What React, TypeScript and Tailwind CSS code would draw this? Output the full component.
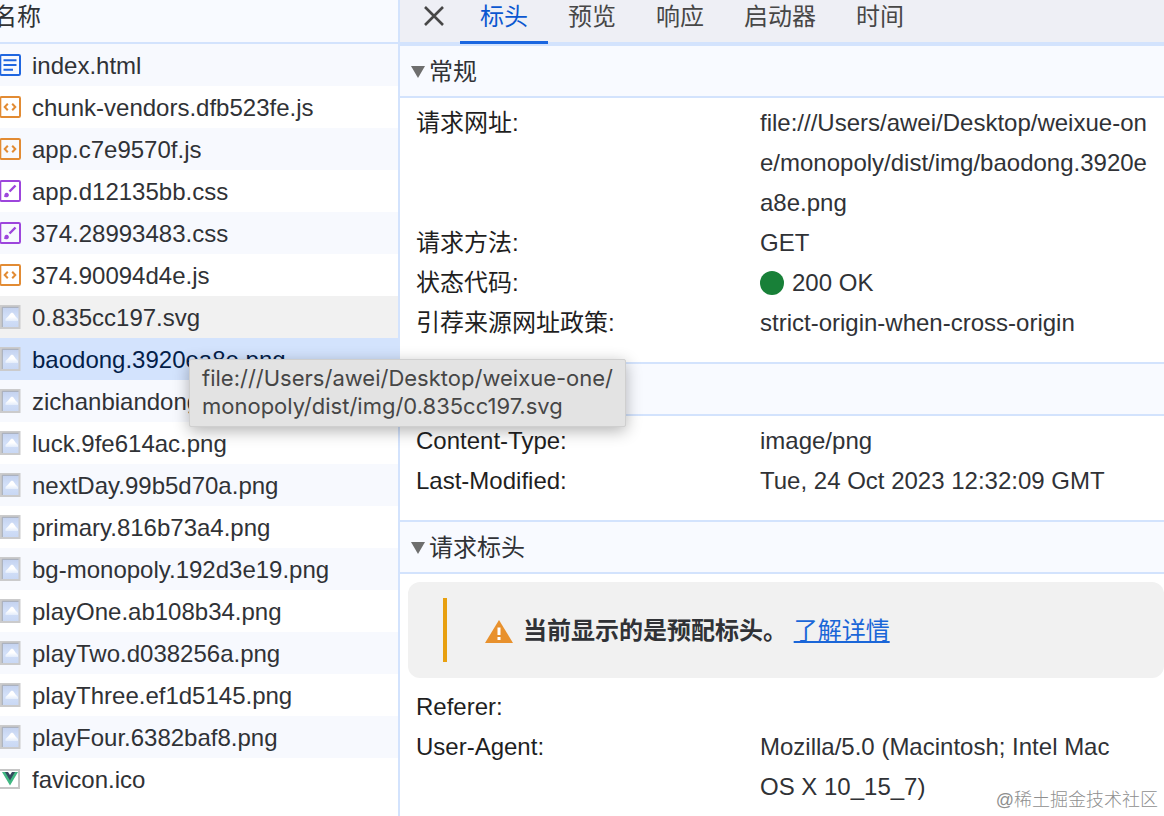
import React, { useState } from 'react';

type FileKind = 'html' | 'js' | 'css' | 'img' | 'vue';

interface NetworkFile {
  name: string;
  kind: FileKind;
}

const files: NetworkFile[] = [
  { name: 'index.html', kind: 'html' },
  { name: 'chunk-vendors.dfb523fe.js', kind: 'js' },
  { name: 'app.c7e9570f.js', kind: 'js' },
  { name: 'app.d12135bb.css', kind: 'css' },
  { name: '374.28993483.css', kind: 'css' },
  { name: '374.90094d4e.js', kind: 'js' },
  { name: '0.835cc197.svg', kind: 'img' },
  { name: 'baodong.3920ea8e.png', kind: 'img' },
  { name: 'zichanbiandong.png', kind: 'img' },
  { name: 'luck.9fe614ac.png', kind: 'img' },
  { name: 'nextDay.99b5d70a.png', kind: 'img' },
  { name: 'primary.816b73a4.png', kind: 'img' },
  { name: 'bg-monopoly.192d3e19.png', kind: 'img' },
  { name: 'playOne.ab108b34.png', kind: 'img' },
  { name: 'playTwo.d038256a.png', kind: 'img' },
  { name: 'playThree.ef1d5145.png', kind: 'img' },
  { name: 'playFour.6382baf8.png', kind: 'img' },
  { name: 'favicon.ico', kind: 'vue' },
];

const tabs = ['标头', '预览', '响应', '启动器', '时间'];

const FileIcon: React.FC<{ kind: FileKind }> = ({ kind }) => {
  if (kind === 'img') {
    return <svg className="h-6 w-[21px] shrink-0" viewBox="0 0 21 24" aria-hidden="true">
      <defs>
        <linearGradient id="sky" x1="0" y1="0" x2="0" y2="1">
          <stop offset="0" stopColor="#c3d1ef" />
          <stop offset="0.5" stopColor="#d3e0f8" />
          <stop offset="1" stopColor="#c9d8f4" />
        </linearGradient>
        <linearGradient id="cloud" x1="0" y1="0" x2="0" y2="1">
          <stop offset="0.5" stopColor="#fff" />
          <stop offset="1" stopColor="#e3ecfb" />
        </linearGradient>
      </defs>
      <path d="M0 0h20.500v24H0z" fill="#cbcbcc" />
      <path d="M2 2h16.500v20H2z" fill="url(#sky)" />
      <path d="M2.300 22V2.300h16.200" fill="none" stroke="#a3a6ad" strokeWidth="0.9" />
      <path d="M5.500 14l2.500-2.200 2.500-3.300 1.500-1 1.500 1 2.200 3.300 2.300 2.200v2h-12.500z" fill="url(#cloud)" />
    </svg>;
  }
  if (kind === 'vue') {
    return <svg className="h-[22px] w-[21px] shrink-0" viewBox="0 0 21 22" aria-hidden="true">
      <path d="M-1 2h20v18H-1z" fill="#fff" stroke="#c6c6c6" strokeWidth="2" />
      <path d="M2 4h4l4 7 4-7h4l-8 13.500z" fill="#41b883" />
      <path d="M5 4h3l2 3 2-3h3l-5 8.500z" fill="#35495e" />
    </svg>;
  }
  const color = kind === 'html' ? '#1f66e0' : kind === 'js' ? '#e28b33' : '#9d45dc';
  return <svg className="h-[22px] w-[21px] shrink-0" viewBox="0 0 21 22" fill="none" stroke={color} aria-hidden="true">
    <rect x="0.300" y="1" width="19.700" height="20" rx="1.200" strokeWidth="2" />
    {kind === 'html' && <path d="M3.500 6.200h13M3.500 11h13M3.500 15.800h9.500" strokeWidth="2" />}
    {kind === 'js' && <path d="M7.800 7.700L4.700 11l3.100 3.300M12.200 7.700l3.100 3.300-3.100 3.300" strokeWidth="2" />}
    {kind === 'css' && <>
      <path d="M15.500 5.500L9.500 11.500" strokeWidth="2.400" />
      <path d="M3.800 16.600c.8-.6.4-1.500.9-2.700.8-1.500 3.100-1.400 3.900 0 .7 1.400 0 2.900-1.500 3.300-1.200.2-2.400.1-3.300-.6z" fill={color} stroke="none" />
    </>}
  </svg>;
};

interface SectionProps {
  title: string;
  children: React.ReactNode;
}

const Section: React.FC<SectionProps> = ({ title, children }) => {
  return <section>
    <h2 className="border-y-2 border-[#d3e3fd] bg-[#f8faff]">
      <button className="flex h-[50px] w-full items-center gap-1 pt-0.5 pl-[11px] text-left text-[#303236]">
        <svg className="h-3 w-3.5" viewBox="0 0 14 12" aria-hidden="true">
          <path d="M0 0h14L7 12z" fill="#6e6e6e" />
        </svg>
        <span>{title}</span>
      </button>
    </h2>
    {children}
  </section>;
};

const HeaderList: React.FC<{ children: React.ReactNode }> = ({ children }) => {
  return <dl className="pt-[5px] pr-2 pb-[19px] pl-4 leading-10">{children}</dl>;
};

const HeaderRow: React.FC<{ label: string; children?: React.ReactNode }> = ({ label, children }) => {
  return <div className="flex">
    <dt className="w-[344px] shrink-0 text-[#1f1f1f]">{label}</dt>
    <dd className="min-w-0 flex-1 break-all text-[#303236]">{children}</dd>
  </div>;
};

const rowColor = (index: number, selected: number) => {
  if (index === selected) return 'bg-[#d3e3fd] text-[#041e49]';
  if (index === 6) return 'bg-[#f1f1f1]';
  return index % 2 === 0 ? 'bg-[#f7f9fe]' : 'bg-white';
};

const App: React.FC = () => {
  const [activeTab, setActiveTab] = useState('标头');
  const [selected, setSelected] = useState(7);

  return <div className="relative flex h-screen overflow-hidden bg-white font-['Liberation_Sans','Noto_Sans_CJK_SC',sans-serif] text-2xl text-[#303236]">
    <aside className="w-[400px] shrink-0 overflow-hidden border-r-2 border-[#d3e3fd]">
      <table className="w-full border-collapse">
        <thead>
          <tr>
            <th className="p-0 text-left font-normal">
              <div className="flex h-11 items-center border-b-2 border-[#d3e3fd] bg-[#f8faff] pb-2">
                <span className="-ml-[7px]">名称</span>
              </div>
            </th>
          </tr>
        </thead>
        <tbody>
          {files.map((file, index) => (
            <tr key={file.name} className={rowColor(index, selected)} onClick={() => setSelected(index)}>
              <td className="p-0">
                <div className="flex h-[42px] items-center gap-[11px]">
                  <FileIcon kind={file.kind} />
                  <span className="truncate pt-0.5">{file.name}</span>
                </div>
              </td>
            </tr>
          ))}
        </tbody>
      </table>
    </aside>

    <main className="min-w-0 flex-1 overflow-hidden">
      <div className="flex h-11 border-b-2 border-[#d3e3fd] bg-[#eeeff5]">
        <button aria-label="关闭" className="flex w-[60px] items-center justify-center pb-2.5 pl-2">
          <svg className="h-5 w-5" viewBox="0 0 20 20" fill="none" stroke="#474747" strokeWidth="2.600" aria-hidden="true">
            <path d="M1 1l18 18M19 1L1 19" />
          </svg>
        </button>
        <div role="tablist" className="flex">
          {tabs.map((tab) => (
            <button
              key={tab}
              role="tab"
              aria-selected={tab === activeTab}
              onClick={() => setActiveTab(tab)}
              className={
                tab === activeTab
                  ? 'h-11 border-b-3 border-[#1a66e0] px-5 pb-[7px] text-[#0b57d0]'
                  : 'h-11 px-5 pb-2.5 text-[#474747]'
              }
            >
              {tab}
            </button>
          ))}
        </div>
      </div>

      <Section title="常规">
        <HeaderList>
          <HeaderRow label="请求网址:">file:///Users/awei/Desktop/weixue-one/monopoly/dist/img/baodong.3920ea8e.png</HeaderRow>
          <HeaderRow label="请求方法:">GET</HeaderRow>
          <HeaderRow label="状态代码:">
            <span className="flex items-center gap-2">
              <span className="size-6 rounded-full bg-[#188038]"></span>
              200 OK
            </span>
          </HeaderRow>
          <HeaderRow label="引荐来源网址政策:">strict-origin-when-cross-origin</HeaderRow>
        </HeaderList>
      </Section>

      <Section title="响应标头">
        <HeaderList>
          <HeaderRow label="Content-Type:">image/png</HeaderRow>
          <HeaderRow label="Last-Modified:">Tue, 24 Oct 2023 12:32:09 GMT</HeaderRow>
        </HeaderList>
      </Section>

      <Section title="请求标头">
        <div className="mt-2 mb-1 ml-2 rounded-xl bg-[#f1f1f1] py-4 pl-[35px]">
          <div className="flex h-16 items-center border-l-4 border-[#e8a010] pt-0.5 pl-[38px]">
            <svg className="mr-2.5 h-6 w-7" viewBox="0 0 28 24" aria-hidden="true">
              <path d="M14 1l14 23H0z" fill="#e8912d" />
              <path d="M12.500 8.500h3v7.500h-3zM12.500 18h3v3h-3z" fill="#fff" />
            </svg>
            <p>
              <strong className="font-bold">当前显示的是预配标头。</strong>{' '}
              <a href="#learn-more" className="text-[#1a66d8] underline">了解详情</a>
            </p>
          </div>
        </div>
        <HeaderList>
          <HeaderRow label="Referer:" />
          <HeaderRow label="User-Agent:">
            Mozilla/5.0 (Macintosh; Intel Mac<br />OS X 10_15_7)
          </HeaderRow>
        </HeaderList>
      </Section>
    </main>

    <div role="tooltip" className="absolute top-[359px] left-[189px] rounded-xs border border-[#cfcfcf] bg-[#e3e3e3] px-3 pt-1 pb-1.5 font-['Inter',sans-serif] text-[22px] leading-7 text-[#464646] shadow-[0_4px_16px_rgba(0,0,0,0.3)]">
      file:///Users/awei/Desktop/weixue-one/<br />monopoly/dist/img/0.835cc197.svg
    </div>
    <div className="absolute right-1.5 bottom-1 text-lg leading-6 font-light text-[#8f8f8f]">@稀土掘金技术社区</div>
  </div>;
};

export default App;
